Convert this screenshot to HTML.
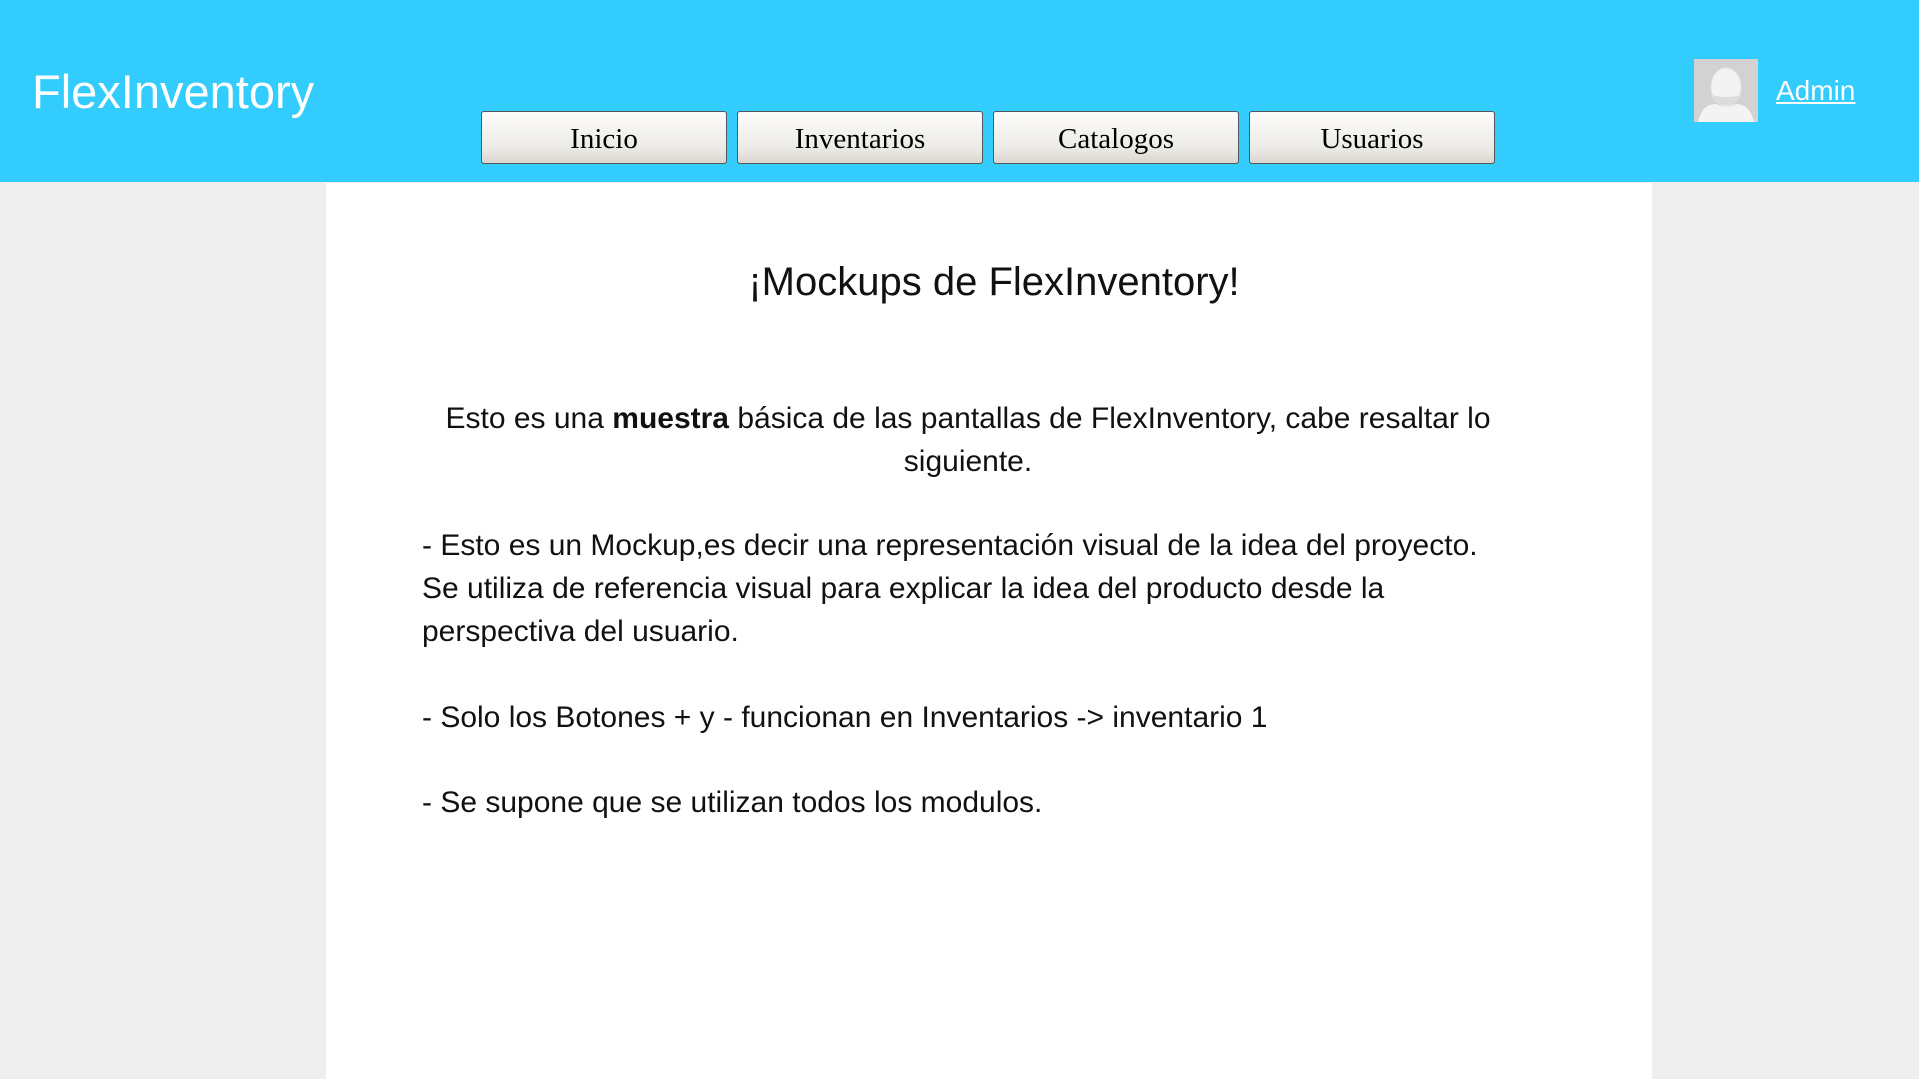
<!DOCTYPE html>
<html><head><meta charset="utf-8"><style>
body{margin:0;width:1919px;height:1079px;background:#eeeeee;position:relative;overflow:hidden;font-family:"Liberation Sans",sans-serif;}
.hdr{position:absolute;left:0;top:0;width:1919px;height:182px;background:#33ccff;}
.logo{position:absolute;left:32px;top:64px;font-size:47px;color:#fff;}
.btn{position:absolute;top:111px;width:244px;height:51px;border:1px solid #555;border-radius:3px;background:linear-gradient(#fcfcfb,#ecebe6 70%,#d9d6cf);font-family:"Liberation Serif",serif;font-size:29px;text-align:center;line-height:55px;color:#000;box-sizing:content-box;}
.av{position:absolute;left:1694px;top:59px;width:64px;height:63px;background:#d2d2d2;overflow:hidden;}
.admin{position:absolute;left:1776px;top:75px;font-size:28px;color:#fff;text-decoration:underline;}
.panel{position:absolute;left:326px;top:183px;width:1326px;height:896px;background:#fff;}
.t{position:absolute;width:1326px;top:260px;text-align:center;font-size:40px;color:#111;}
.p{position:absolute;font-size:30px;line-height:43px;color:#111;}
</style></head><body>
<div class="hdr"></div>
<div class="logo">FlexInventory</div>
<div class="btn" style="left:481px">Inicio</div>
<div class="btn" style="left:737px">Inventarios</div>
<div class="btn" style="left:993px">Catalogos</div>
<div class="btn" style="left:1249px">Usuarios</div>
<div class="av"><svg width="64" height="63" viewBox="0 0 64 63"><ellipse cx="32" cy="28" rx="15" ry="19" fill="#f3f3f3" stroke="#e4e4e4"/><path d="M17 36 Q32 40 47 36 Q44 46 32 46 Q20 46 17 36Z" fill="#dcdcdc"/><path d="M4 63 Q8 45 22 45 Q32 50 42 45 Q56 45 60 63Z" fill="#f3f3f3"/></svg></div>
<div class="admin">Admin</div>
<div class="panel"></div>
<div class="t" style="left:331px">¡Mockups de FlexInventory!</div>
<div class="p" style="left:413px;width:1110px;top:397px;text-align:center">Esto es una <b>muestra</b> básica de las pantallas de FlexInventory, cabe resaltar lo siguiente.</div>
<div class="p" style="left:422px;width:1080px;top:524px">- Esto es un Mockup,es decir una representación visual de la idea del proyecto. Se utiliza de referencia visual para explicar la idea del producto desde la perspectiva del usuario.</div>
<div class="p" style="left:422px;top:696px">- Solo los Botones + y - funcionan en Inventarios -&gt; inventario 1</div>
<div class="p" style="left:422px;top:781px">- Se supone que se utilizan todos los modulos.</div>
</body></html>
